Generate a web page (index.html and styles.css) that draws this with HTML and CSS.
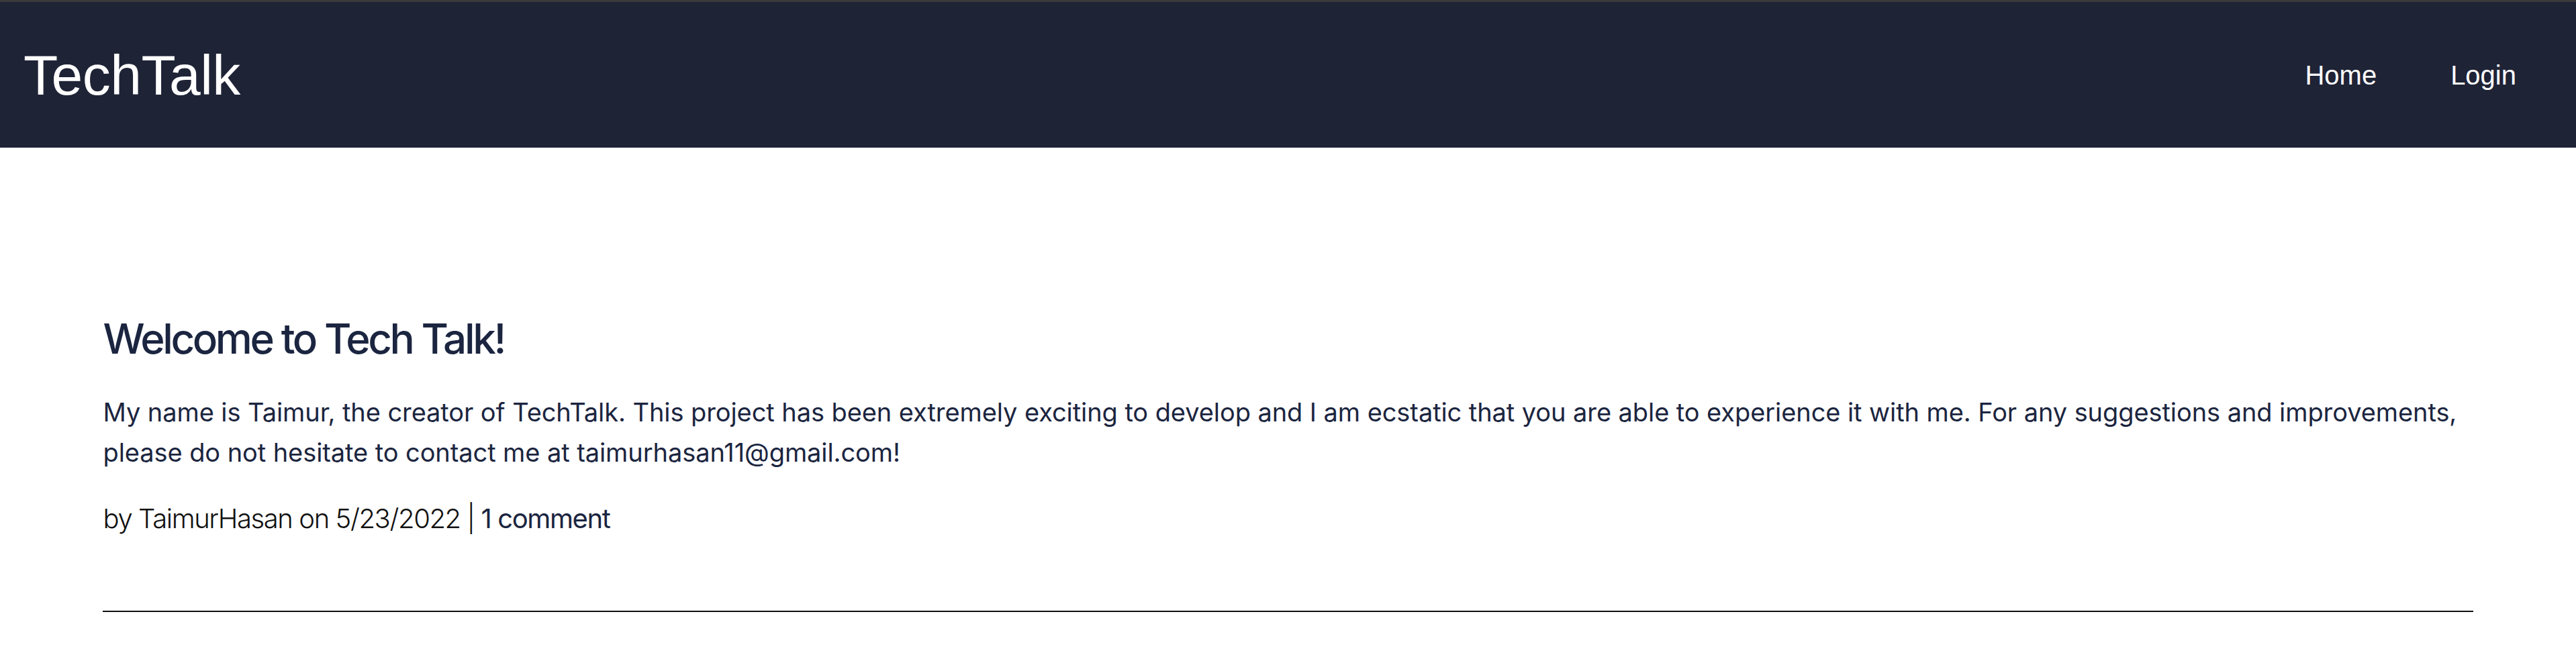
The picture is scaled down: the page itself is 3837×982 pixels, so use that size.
FILE: index.html
```html
<!DOCTYPE html>
<html lang="en">
<head>
<meta charset="utf-8">
<title>TechTalk</title>
<link rel="stylesheet" href="styles.css">
</head>
<body>
<header class="site-header">
  <a class="brand" href="#">TechTalk</a>
  <nav class="nav">
    <a class="nav-link" href="#">Home</a>
    <a class="nav-link" href="#">Login</a>
  </nav>
</header>
<main class="content">
  <article class="post">
    <h1 class="post-title">Welcome to Tech Talk!</h1>
    <p class="post-body">My name is Taimur, the creator of TechTalk. This project has been extremely exciting to develop and I am ecstatic that you are able to experience it with me. For any suggestions and improvements, please do not hesitate to contact me at taimurhasan11@gmail.com!</p>
    <p class="post-meta">by TaimurHasan on 5/23/2022 | <a class="comment-link" href="#">1 comment</a></p>
  </article>
  <hr class="divider">
</main>
</body>
</html>
```
FILE: styles.css
```css
* { box-sizing: border-box; }
html, body { margin: 0; padding: 0; background: #ffffff; }
body { font-family: Inter, "Noto Sans", sans-serif; }

.site-header {
  height: 220px;
  border-top: 3px solid #3a3a3c;
  background: #1f2336;
  display: flex;
  align-items: center;
  justify-content: space-between;
  padding: 0 89px 0 35px;
}
.brand {
  font-family: "Liberation Sans", Arial, sans-serif;
  font-size: 84px;
  letter-spacing: -0.5px;
  color: #ffffff;
  text-decoration: none;
  line-height: 1;
}
.nav { display: flex; gap: 110px; align-items: center; }
.nav-link {
  font-family: "Liberation Sans", Arial, sans-serif;
  font-size: 40px;
  color: #ffffff;
  text-decoration: none;
  line-height: 1;
}

.content {
  width: 92%;
  margin: 0 auto;
  padding-top: 248px;
}
.post-title {
  margin: 0;
  font-size: 62px;
  line-height: 74px;
  font-weight: 500;
  letter-spacing: -3.4px;
  color: #1b2540;
}
.post-body {
  margin: 42px 0 0;
  font-size: 38px;
  line-height: 60px;
  font-weight: 400;
  letter-spacing: -0.08px;
  color: #1b2540;
}
.post-meta {
  margin: 39px 0 0;
  font-size: 40px;
  line-height: 60px;
  font-weight: 300;
  letter-spacing: -1.4px;
  color: #111111;
}
.comment-link {
  color: #1b2540;
  font-weight: 400;
  text-decoration: none;
}
.divider {
  margin: 107px 0 0;
  border: 0;
  border-top: 2px solid #111111;
  height: 0;
}
```
